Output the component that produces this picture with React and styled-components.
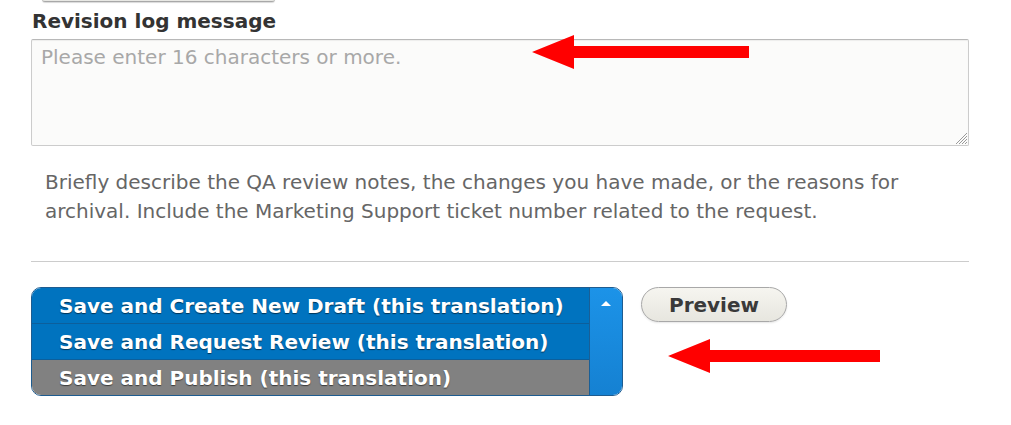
import styled, { createGlobalStyle } from "styled-components";

const GlobalStyle = createGlobalStyle`
  html, body {
    margin: 0;
    padding: 0;
    background: #fff;
    font-family: "DejaVu Sans", "Liberation Sans", sans-serif;
  }
`;

const Page = styled.div`
  position: relative;
  width: 938px;
  padding-left: 31px;
  height: 425px;
  overflow: hidden;
`;

const TopStub = styled.div`
  margin-left: 11px;
  width: 233px;
  height: 2px;
  background: #e8e8e4;
  border-bottom: 1px solid #a8a8a8;
  border-radius: 0 0 4px 4px;
  box-shadow: 0 1px 1px rgba(0, 0, 0, 0.15);
  margin-top: -1px;
`;

const Label = styled.label`
  display: block;
  margin: 7px 0 6px 1px;
  font-size: 20px;
  line-height: 24px;
  font-weight: bold;
  color: #333;
`;

const Field = styled.div`
  position: relative;
  width: 938px;
`;

const TextArea = styled.textarea`
  display: block;
  box-sizing: border-box;
  width: 938px;
  height: 107px;
  margin: 0;
  padding: 5px 9px;
  font-family: inherit;
  font-size: 20px;
  line-height: 24px;
  color: #333;
  background: #fbfbfa;
  border: 1px solid #ccc;
  border-top-color: #b8b8b8;
  border-radius: 2px;
  box-shadow: inset 0 1px 1px rgba(0, 0, 0, 0.06);
  outline: none;
  resize: none;
  &::placeholder {
    color: #a8a8a8;
  }
`;

const Grip = styled.svg`
  position: absolute;
  right: 2px;
  bottom: 2px;
  pointer-events: none;
`;

const Description = styled.div`
  margin: 22px 0 0;
  padding: 0 14px;
  font-size: 20px;
  line-height: 29px;
  color: #666;
`;

const Rule = styled.hr`
  margin: 35px 0 0;
  border: 0;
  border-top: 1px solid #ccc;
  width: 938px;
`;

const Actions = styled.div`
  display: flex;
  align-items: flex-start;
  margin-top: 25px;
  gap: 18px;
`;

const DropButton = styled.div`
  display: flex;
  width: 592px;
  box-sizing: border-box;
  border: 1px solid #1e5c90;
  border-radius: 10px;
  overflow: hidden;
`;

const OptionList = styled.div`
  flex: 1;
  display: flex;
  flex-direction: column;
`;

const Option = styled.div`
  height: ${(p) => (p.$first ? "35px" : "36px")};
  box-sizing: border-box;
  padding-left: 27px;
  display: flex;
  align-items: center;
  font-size: 20px;
  font-weight: bold;
  color: #fff;
  text-shadow: 0 1px 1px rgba(0, 0, 0, 0.55);
  background: ${(p) => (p.$muted ? "#818181" : "#0073bf")};
  border-top: ${(p) => (p.$first ? "0" : "1px solid #0c5f9c")};
  white-space: nowrap;
`;

const Toggle = styled.div`
  width: 33px;
  border-left: 1px solid #1a5f96;
  background: linear-gradient(#1c93e8, #1581d2);
  display: flex;
  justify-content: center;
  padding-top: 13px;
  box-sizing: border-box;
`;

const Caret = styled.span`
  width: 0;
  height: 0;
  border-left: 5px solid transparent;
  border-right: 5px solid transparent;
  border-bottom: 5px solid #fff;
`;

const PreviewButton = styled.button`
  height: 35px;
  padding: 0 27px;
  font-family: inherit;
  font-size: 20px;
  font-weight: bold;
  color: #3a3a3a;
  background: linear-gradient(#f6f5f0, #e7e6df);
  border: 1px solid #a8a8a8;
  border-radius: 18px;
  box-shadow: 0 1px 2px rgba(0, 0, 0, 0.1);
  cursor: pointer;
`;

const Arrow = styled.svg`
  position: absolute;
  left: ${(p) => p.$x}px;
  top: ${(p) => p.$y}px;
`;

function RedArrow({ x, y, length }) {
  return (
    <Arrow $x={x} $y={y} width={length} height={34} viewBox={`0 0 ${length} 34`}>
      <polygon
        points={`0,17 42,0 42,11 ${length},11 ${length},23 42,23 42,34`}
        fill="#ff0000"
      />
    </Arrow>
  );
}

export default function App() {
  return (
    <>
      <GlobalStyle />
      <Page>
        <TopStub />
        <Label htmlFor="revlog">Revision log message</Label>
        <Field>
          <TextArea id="revlog" placeholder="Please enter 16 characters or more." />
          <Grip width="12" height="12" viewBox="0 0 12 12">
            <g stroke="#9a9a9a" strokeWidth="1">
              <line x1="12" y1="1" x2="1" y2="12" />
              <line x1="12" y1="4" x2="4" y2="12" />
              <line x1="12" y1="7" x2="7" y2="12" />
              <line x1="12" y1="10" x2="10" y2="12" />
            </g>
          </Grip>
        </Field>
        <Description>
          Briefly describe the QA review notes, the changes you have made, or
          the reasons for archival. Include the Marketing Support ticket number
          related to the request.
        </Description>
        <Rule />
        <Actions>
          <DropButton>
            <OptionList>
              <Option $first>Save and Create New Draft (this translation)</Option>
              <Option>Save and Request Review (this translation)</Option>
              <Option $muted>Save and Publish (this translation)</Option>
            </OptionList>
            <Toggle>
              <Caret />
            </Toggle>
          </DropButton>
          <PreviewButton>Preview</PreviewButton>
        </Actions>
        <RedArrow x={532} y={35} length={217} />
        <RedArrow x={668} y={339} length={212} />
      </Page>
    </>
  );
}
